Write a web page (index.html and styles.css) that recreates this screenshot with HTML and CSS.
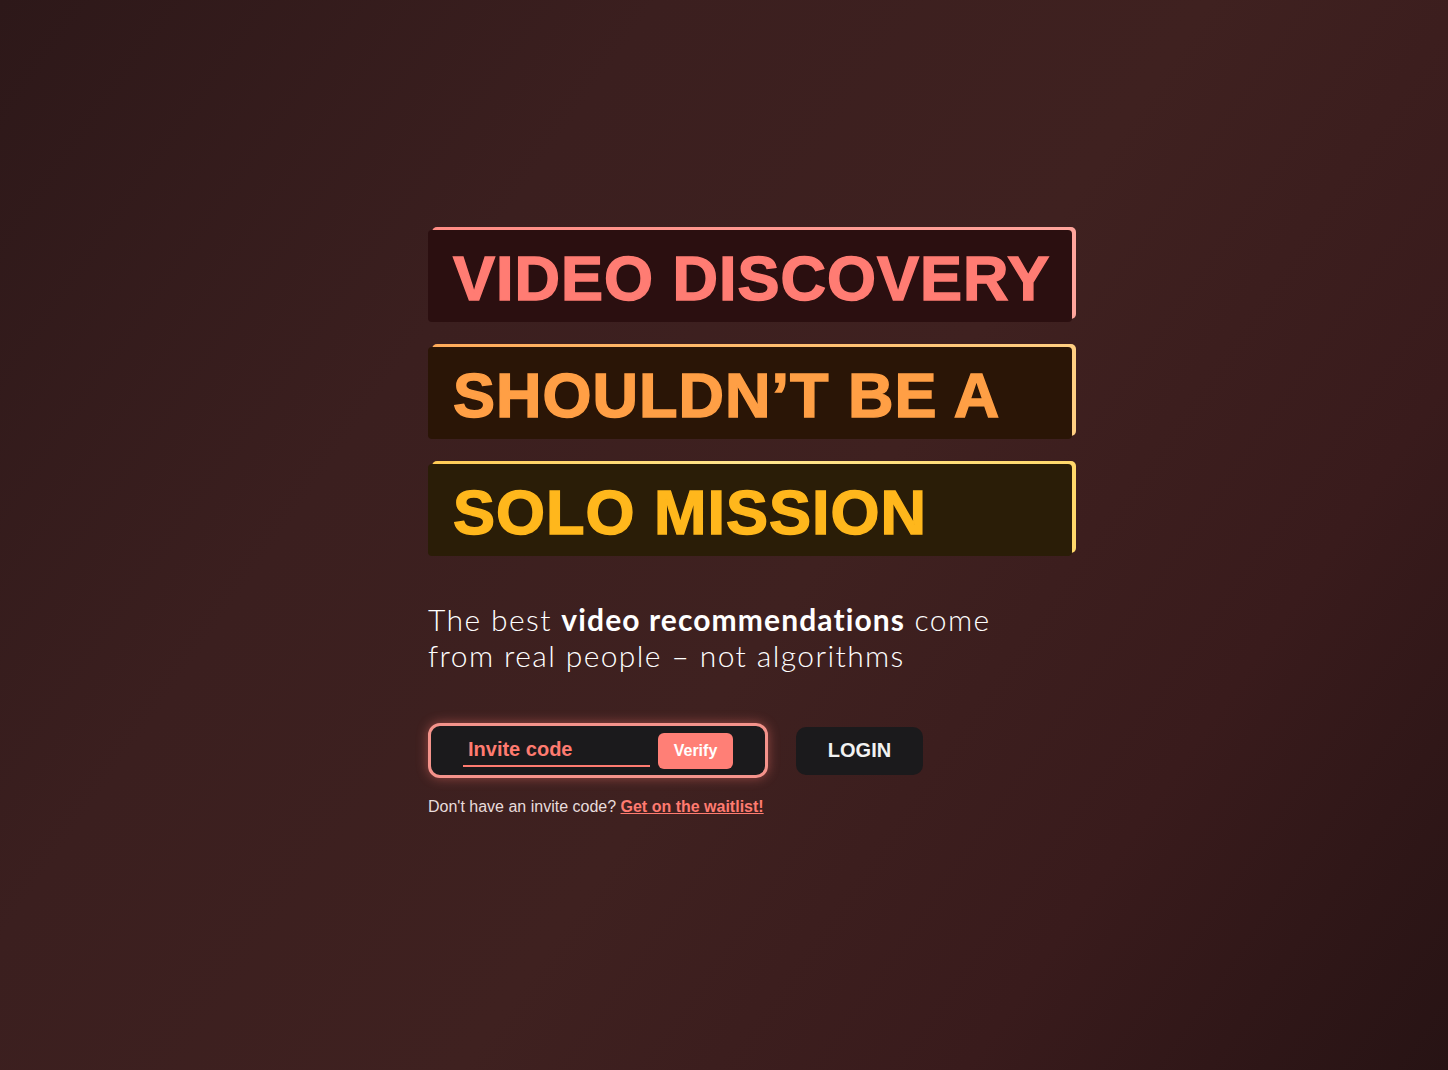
FILE: index.html
```html
<!DOCTYPE html>
<html lang="en">
<head>
<meta charset="utf-8">
<title>Video discovery</title>
<link rel="stylesheet" href="styles.css">
</head>
<body>
<main class="page">
  <section class="hero">
    <div class="headlines">
      <h1 class="headline headline-pink"><span>VIDEO DISCOVERY</span></h1>
      <h1 class="headline headline-orange"><span>SHOULDN’T BE A</span></h1>
      <h1 class="headline headline-gold"><span>SOLO MISSION</span></h1>
    </div>
    <p class="tagline">The best <strong>video recommendations</strong> come<br>from real people – not algorithms</p>
    <div class="actions">
      <form class="invite">
        <input class="invite-input" type="text" placeholder="Invite code">
        <button class="verify" type="button">Verify</button>
      </form>
      <button class="login" type="button">LOGIN</button>
    </div>
    <p class="waitlist">Don't have an invite code? <a href="#">Get on the waitlist!</a></p>
  </section>
</main>
</body>
</html>
```

FILE: styles.css
```css
* { box-sizing: border-box; }
html, body { margin: 0; height: 100%; }
body {
  background: linear-gradient(125deg, #2d1819 0%, #3b1f1f 30%, #3f2120 55%, #391b1c 78%, #271314 100%);
  font-family: "Liberation Sans", Arial, sans-serif;
  color: #fff;
}
.page {
  min-height: 100vh;
  display: flex;
  justify-content: center;
}
.hero {
  width: 592px;
  padding-top: 230px;
}
.headlines {
  display: flex;
  flex-direction: column;
  gap: 25px;
}
.headline {
  position: relative;
  margin: 0;
  width: 644px;
  height: 92px;
  border-radius: 4px;
  display: flex;
  align-items: center;
  padding: 4px 0 0 25px;
  font-family: "Liberation Sans", Arial, sans-serif;
  font-weight: 700;
  font-size: 63px;
  line-height: 1;
  -webkit-text-stroke: 1.5px currentColor;
  letter-spacing: 1px;
}
.headline::before {
  content: "";
  position: absolute;
  top: -3px;
  left: 4px;
  right: -4px;
  bottom: 3px;
  border-radius: 5px;
  z-index: -1;
}
.headline-pink { background: #2b0f10; color: #ff7c73; }
.headline-pink::before { background: linear-gradient(90deg, #ff8c84, #ffa59c); }
.headline-orange { background: #2a1506; color: #ff9f45; }
.headline-orange::before { background: linear-gradient(90deg, #ffab5a, #ffcf82); }
.headline-gold { background: #2a1d07; color: #ffb71c; }
.headline-gold::before { background: linear-gradient(90deg, #ffcb55, #ffe58e, #ffd86a); }

.tagline {
  margin: 45px 0 0;
  font-family: "Lato", "Open Sans", sans-serif;
  font-weight: 300;
  font-size: 30px;
  line-height: 36px;
  letter-spacing: 1.4px;
  color: #fff;
  width: 700px;
}
.tagline strong { font-weight: 700; letter-spacing: 1.1px; }

.actions {
  margin-top: 50px;
  display: flex;
  align-items: center;
  gap: 28px;
}
.invite {
  margin: 0;
  width: 340px;
  height: 55px;
  display: flex;
  align-items: center;
  gap: 8px;
  padding: 0 32px;
  background: #1b1a1c;
  border: 3px solid #f4938b;
  border-radius: 12px;
  box-shadow: 0 0 12px rgba(255, 120, 110, 0.45);
}
.invite-input {
  width: 187px;
  height: 32px;
  padding: 0 5px 0;
  background: transparent;
  border: none;
  border-bottom: 2px solid #ff7b70;
  outline: none;
  font-family: "Liberation Sans", Arial, sans-serif;
  font-weight: 700;
  font-size: 20px;
  color: #ff7b70;
}
.invite-input::placeholder { color: #ff7b70; opacity: 1; }
.verify {
  width: 75px;
  height: 36px;
  border: none;
  border-radius: 6px;
  background: #ff7f76;
  color: #fff;
  font-family: "Liberation Sans", Arial, sans-serif;
  font-weight: 700;
  font-size: 16px;
  padding: 0;
}
.login {
  width: 127px;
  height: 48px;
  border: none;
  border-radius: 10px;
  background: #1b1a1c;
  color: #f2f2f2;
  font-family: "Liberation Sans", Arial, sans-serif;
  font-weight: 700;
  font-size: 20px;
  padding: 0;
}
.waitlist {
  margin: 20px 0 0;
  font-size: 16px;
  color: #e8dcdc;
}
.waitlist a {
  color: #ff7b70;
  font-weight: 700;
  text-decoration: underline;
}
```
